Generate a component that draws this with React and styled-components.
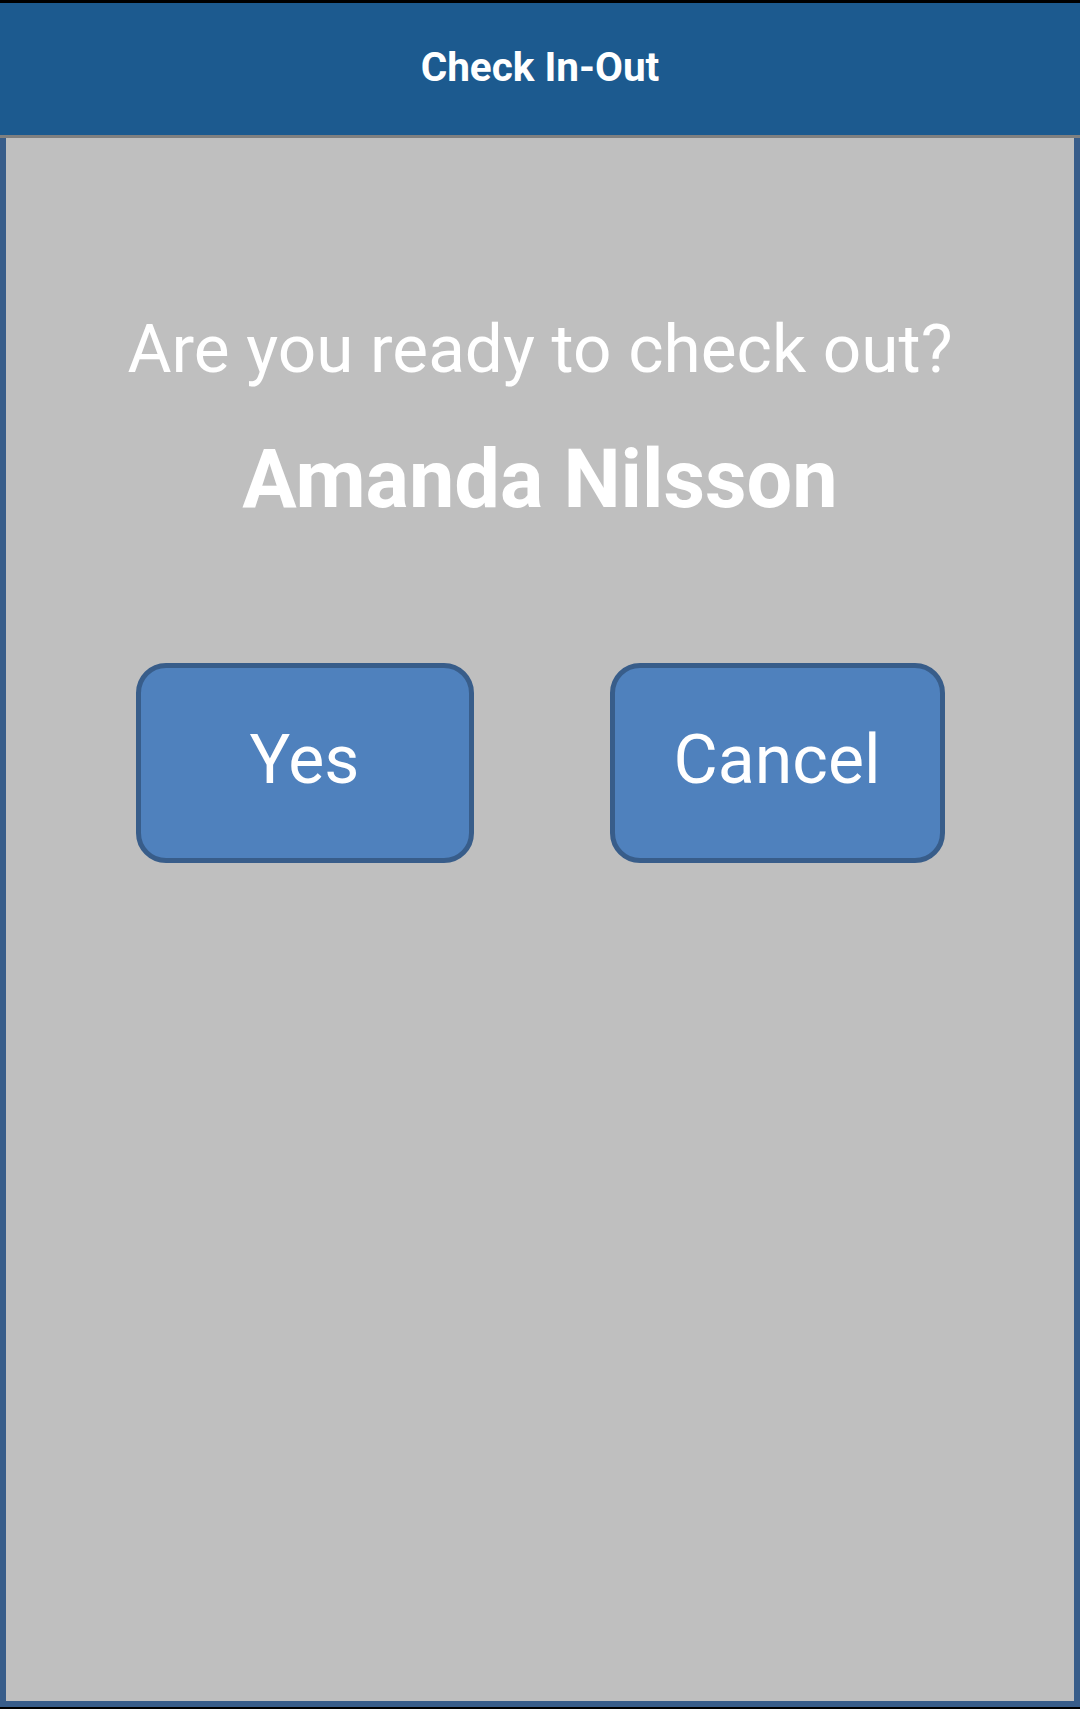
import React from "react";
import styled, { createGlobalStyle } from "styled-components";

const GlobalStyle = createGlobalStyle`
  html, body {
    margin: 0;
    padding: 0;
    background: #000000;
  }
  #root {
    height: 1709px;
  }
`;

const Screen = styled.div`
  height: 1709px;
  box-sizing: border-box;
  padding: 3px 0 2px;
  display: flex;
  flex-direction: column;
  font-family: Roboto, "Liberation Sans", sans-serif;
  color: #ffffff;
`;

const Header = styled.header`
  height: 132px;
  flex: none;
  box-sizing: content-box;
  background: #1c5a8f;
  border-bottom: 3px solid #808080;
  display: flex;
  align-items: center;
  justify-content: center;
`;

const Title = styled.h1`
  margin: 0 0 4px;
  font-size: 40.5px;
  line-height: 1;
  font-weight: 700;
`;

const Panel = styled.main`
  flex: 1;
  box-sizing: border-box;
  background: #bfbfbf;
  border: 6px solid #385d8a;
  border-top: none;
  padding-top: 177px;
  display: flex;
  flex-direction: column;
  align-items: center;
`;

const Question = styled.p`
  margin: 0;
  font-size: 67.5px;
  line-height: 1;
  font-weight: 400;
`;

const Name = styled.h2`
  margin: 56px 0 0;
  font-size: 81px;
  line-height: 1;
  font-weight: 700;
`;

const ButtonRow = styled.div`
  margin-top: 143px;
  display: flex;
  gap: 136px;
`;

const ActionButton = styled.button`
  width: ${(p) => p.$width}px;
  height: 200px;
  box-sizing: border-box;
  background: #4f81bd;
  border: 5px solid #385d8a;
  border-radius: 30px;
  color: #ffffff;
  font-family: Roboto, "Liberation Sans", sans-serif;
  font-size: 68px;
  line-height: 1;
  font-weight: 400;
  padding: 0 0 6px;
  display: flex;
  align-items: center;
  justify-content: center;
  cursor: pointer;
`;

export default function App() {
  return (
    <>
      <GlobalStyle />
      <Screen>
        <Header>
          <Title>Check In-Out</Title>
        </Header>
        <Panel>
          <Question>Are you ready to check out?</Question>
          <Name>Amanda Nilsson</Name>
          <ButtonRow>
            <ActionButton $width={338}>Yes</ActionButton>
            <ActionButton $width={335}>Cancel</ActionButton>
          </ButtonRow>
        </Panel>
      </Screen>
    </>
  );
}
